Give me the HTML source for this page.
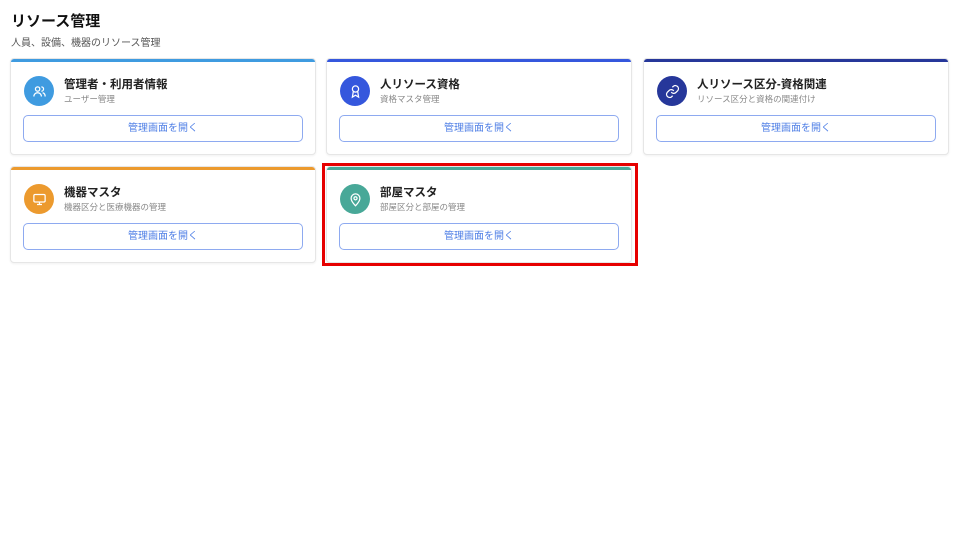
<!DOCTYPE html>
<html><head><meta charset="utf-8"><style>
*{box-sizing:border-box;margin:0;padding:0}
body{width:960px;height:540px;background:#fff;font-family:"Liberation Sans","Noto Sans CJK JP",sans-serif;position:relative;overflow:hidden}
h1{position:absolute;left:11px;top:10px;font-size:15px;font-weight:700;color:#111}
.sub{position:absolute;left:11px;top:34px;font-size:10px;color:#555}
.card{position:absolute;width:306px;height:97px;border:1px solid #e6e6e6;border-radius:4px;background:#fff;box-shadow:0 1px 2px rgba(0,0,0,.06);overflow:hidden}
.bar{position:absolute;left:0;top:0;right:0;height:3px}
.ic{position:absolute;left:13px;top:17px;width:30px;height:30px;border-radius:50%;display:flex;align-items:center;justify-content:center}
.t{position:absolute;left:53px;top:17px;font-size:11.5px;font-weight:700;color:#222}
.s{position:absolute;left:53px;top:34px;font-size:8.5px;color:#888}
.btn{position:absolute;left:12px;top:56px;width:280px;height:27px;border:1px solid #8eaaf0;border-radius:5px;text-align:center;line-height:25px;font-size:10px;color:#4f7fe6}
.red{position:absolute;left:322px;top:163px;width:316px;height:103px;border:3px solid #e60000}
</style></head><body>
<h1>リソース管理</h1>
<div class="sub">人員、設備、機器のリソース管理</div>

<div class="card" style="left:10px;top:58px"><div class="bar" style="background:#3f9be0"></div>
<div class="ic" style="background:#3f9be0"><svg width="15" height="15" viewBox="0 0 24 24" fill="none" stroke="#fff" stroke-width="2"><circle cx="9" cy="8" r="3.5"/><path d="M3 20c0-3.5 2.5-6 6-6s6 2.5 6 6"/><path d="M15 4.5a3.5 3.5 0 0 1 0 7M17 14c2.5.5 4 3 4 6"/></svg></div>
<div class="t">管理者・利用者情報</div><div class="s">ユーザー管理</div><div class="btn">管理画面を開く</div></div>

<div class="card" style="left:326px;top:58px"><div class="bar" style="background:#3557dd"></div>
<div class="ic" style="background:#3557dd"><svg width="15" height="15" viewBox="0 0 24 24" fill="none" stroke="#fff" stroke-width="2"><circle cx="12" cy="8" r="5"/><path d="M8.5 12l-1.5 9 5-3 5 3-1.5-9"/></svg></div>
<div class="t">人リソース資格</div><div class="s">資格マスタ管理</div><div class="btn">管理画面を開く</div></div>

<div class="card" style="left:643px;top:58px"><div class="bar" style="background:#26379a"></div>
<div class="ic" style="background:#26379a"><svg width="15" height="15" viewBox="0 0 24 24" fill="none" stroke="#fff" stroke-width="2"><path d="M10 13a5 5 0 0 0 7.5.5l3-3a5 5 0 0 0-7-7l-1.7 1.7"/><path d="M14 11a5 5 0 0 0-7.5-.5l-3 3a5 5 0 0 0 7 7l1.7-1.7"/></svg></div>
<div class="t">人リソース区分-資格関連</div><div class="s">リソース区分と資格の関連付け</div><div class="btn">管理画面を開く</div></div>

<div class="card" style="left:10px;top:166px"><div class="bar" style="background:#ec9a2e"></div>
<div class="ic" style="background:#ec9a2e"><svg width="15" height="15" viewBox="0 0 24 24" fill="none" stroke="#fff" stroke-width="2"><rect x="3" y="4" width="18" height="12" rx="2"/><path d="M12 16v4M8 20h8"/></svg></div>
<div class="t">機器マスタ</div><div class="s">機器区分と医療機器の管理</div><div class="btn">管理画面を開く</div></div>

<div class="card" style="left:326px;top:166px"><div class="bar" style="background:#48a898"></div>
<div class="ic" style="background:#48a898"><svg width="15" height="15" viewBox="0 0 24 24" fill="none" stroke="#fff" stroke-width="2"><path d="M12 22s7-6.5 7-12a7 7 0 0 0-14 0c0 5.5 7 12 7 12z"/><circle cx="12" cy="10" r="2.5"/></svg></div>
<div class="t">部屋マスタ</div><div class="s">部屋区分と部屋の管理</div><div class="btn">管理画面を開く</div></div>

<div class="red"></div>
</body></html>
